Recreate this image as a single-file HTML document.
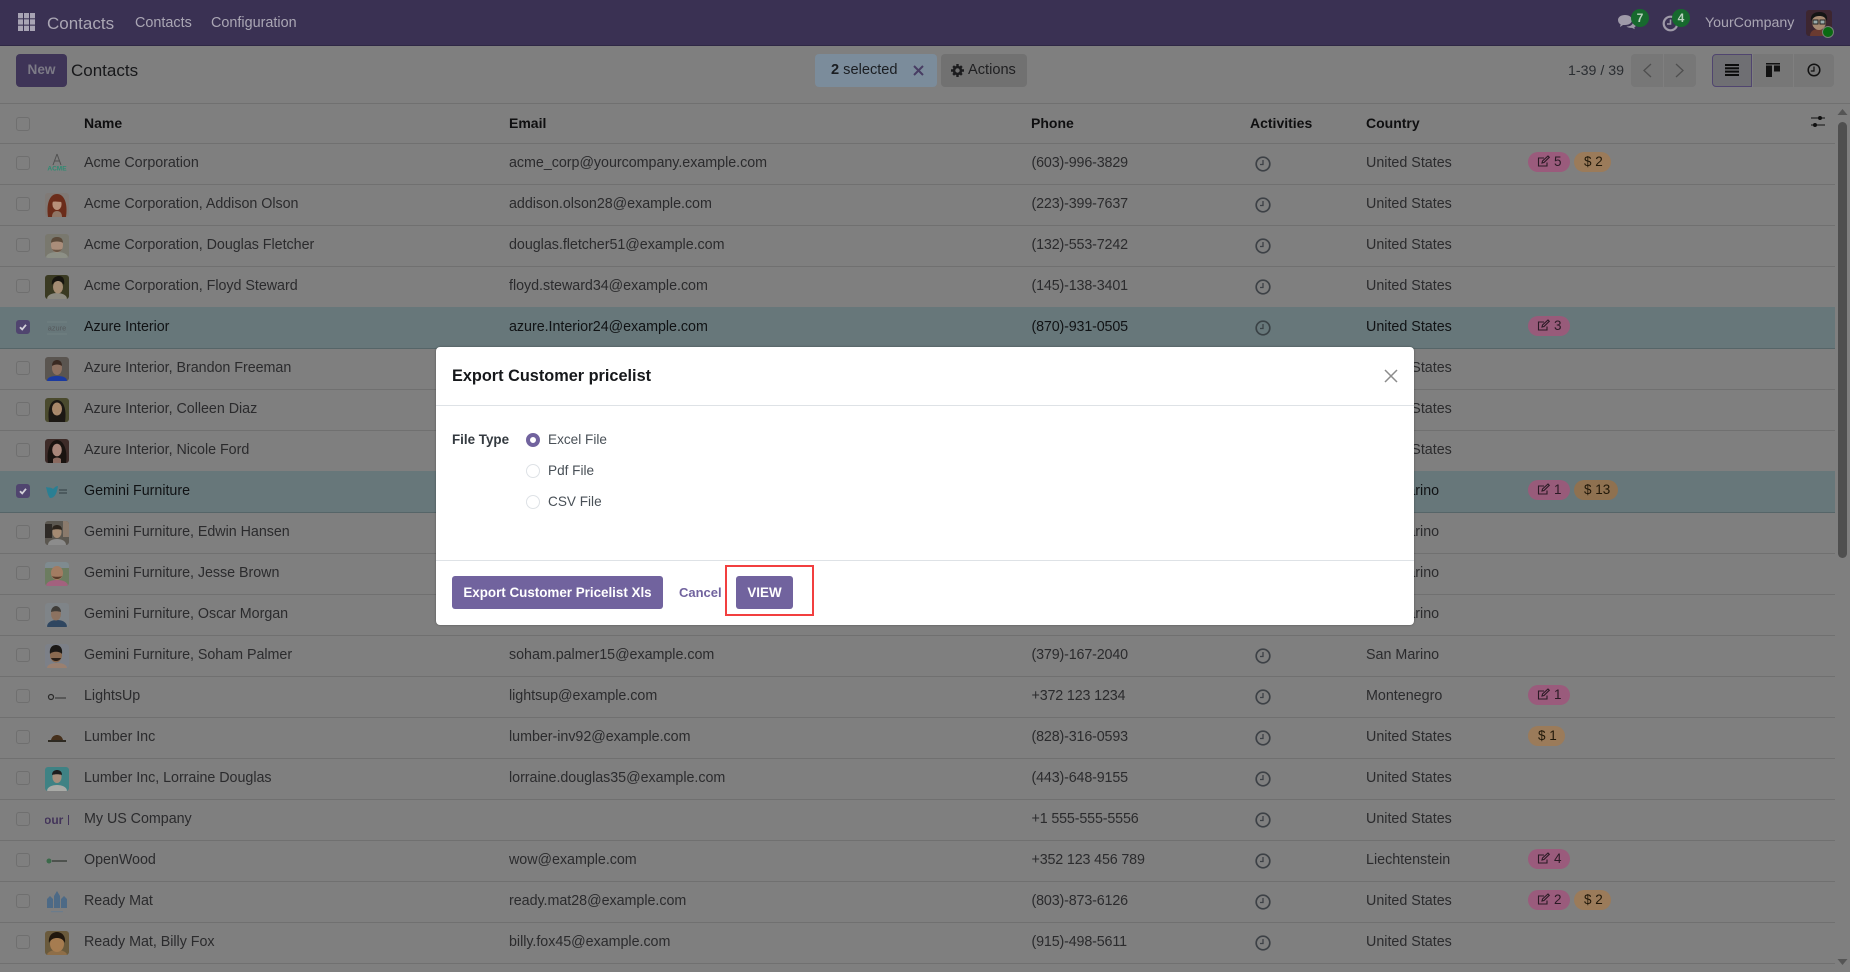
<!DOCTYPE html>
<html lang="en"><head><meta charset="utf-8"><title>Contacts</title>
<style>
*{box-sizing:border-box}
html,body{margin:0;padding:0;width:1850px;height:972px;overflow:hidden;background:#7f7f7f;font-family:"Liberation Sans",sans-serif;color:#2b2b2d}
.dim{position:absolute;left:0;top:0;width:1850px;height:972px;background:#7f7f7f}
.abs,.nav span,.cp>*,.r>*{position:absolute;white-space:nowrap}
.nav{position:absolute;left:0;top:0;width:1850px;height:46px;background:#3a3153;border-bottom:1px solid #2f2845;color:#aaa6b4;font-size:14.4px}
.nav span{line-height:47px;top:0}
.cp{position:absolute;left:0;top:46px;width:1850px;height:58px;border-bottom:1px solid #707070}
.btn{top:8px;height:33px;border-radius:4px;line-height:32px;font-size:14.6px}
.list{position:absolute;left:0;top:104px;width:1835px}
.h{position:relative;height:40px;border-bottom:1px solid #707070;font-weight:bold;font-size:14px;color:#0f0f10}
.h span{position:absolute;top:0;line-height:38px}
.r{position:relative;height:41px;border-bottom:1px solid #707070;font-size:14.3px;color:#2b2b2d}
.r.s{background:#67777a;color:#101214;border-bottom-color:#566568;box-shadow:0 -1px 0 #67777a}
.r>span{top:0;line-height:38px}
.n{left:84px;letter-spacing:-.03px}.e{left:509px;letter-spacing:-.03px}.p{left:1031.500px;letter-spacing:-.15px}.c{left:1366px}
.cb{position:absolute;left:16px;top:12px;width:14px;height:14px;border:1px solid #6f6f6f;border-radius:3px}
.s .cb{background:#50456f;border-color:#50456f}
.cb svg{position:absolute;left:1px;top:1px}
.av{position:absolute;left:45px;top:8px;width:24px;height:24px;border-radius:3px;overflow:hidden}
.ck{position:absolute;left:1255px;top:12px;width:16px;height:16px}
.t{position:absolute;top:8px;height:20px;border-radius:10px;line-height:19px;font-size:13.5px;color:#2b1a25;padding-left:10px}
.t svg{position:absolute;left:9px;top:3px}
.t1{background:#9a5b7c}.t2{background:#9b7b5a;color:#201708}
.t1 b{font-weight:normal;position:absolute;left:26px}
.t2 b{font-weight:normal}
.bd{position:absolute;border-radius:50%;background:#17692e;color:#b9d3bf;text-align:center;font-size:12px;font-weight:bold;width:18px;height:18px;line-height:18px}
.modal{position:absolute;left:436px;top:347px;width:978px;height:278px;background:#fff;border-radius:4px;box-shadow:0 0 2px rgba(0,0,0,.35);color:#495057}
.modal>*{position:absolute;white-space:nowrap}
.rd{width:14px;height:14px;border-radius:50%;border:1px solid #dee2e6;left:90px}
.lb{left:112px;font-size:13.6px;line-height:16px}
.mb{top:229px;height:33px;background:#71639e;color:#fff;border-radius:3px;font-weight:bold;font-size:13.4px;line-height:33px;text-align:center}
</style></head><body>

<div class="dim">
<div class="nav">
<svg class="abs" style="left:18px;top:13px" width="17" height="18" fill="#a8a4b4"><rect width="5" height="5.300"/><rect x="6" width="5" height="5.300"/><rect x="12" width="5" height="5.300"/><rect y="6.300" width="5" height="5.300"/><rect x="6" y="6.300" width="5" height="5.300"/><rect x="12" y="6.300" width="5" height="5.300"/><rect y="12.700" width="5" height="5.300"/><rect x="6" y="12.700" width="5" height="5.300"/><rect x="12" y="12.700" width="5" height="5.300"/></svg>
<span style="left:47px;font-size:17px">Contacts</span>
<span style="left:135px">Contacts</span>
<span style="left:211px">Configuration</span>
<svg class="abs" style="left:1618px;top:14px" width="20" height="16" fill="#9f9aa9"><path d="M0 6C0 3 3 1 7 1s7 2 7 5-3 5-7 5H5l-3 2 .6-2.600C1 9.500 0 8 0 6z"/><path d="M9 12.500c3.500 0 6-2 6.500-5 1.500.6 2.500 1.800 2.500 3.200 0 1.200-.7 2.200-1.800 2.800l.6 1.800-2.800-1.400h-1c-1.800 0-3.500-.5-4.500-1.400z"/></svg>
<div class="bd" style="left:1631px;top:9px">7</div>
<svg class="abs" style="left:1662px;top:15px" width="17" height="17" fill="none" stroke="#9f9aa9" stroke-width="2.200"><circle cx="8.500" cy="8.500" r="6.800"/><path d="M8.500 4.500v4.500h-3.500" stroke-width="1.600"/></svg>
<div class="bd" style="left:1672px;top:9px">4</div>
<span style="left:1705px;font-size:14.2px">YourCompany</span>
<svg class="abs" style="left:1806px;top:10px;border-radius:3px" width="26" height="26" viewBox="0 0 26 26"><rect width="26" height="26" fill="#3d2630"/><path d="M4 26c0-5 4-7 9-7s9 2 9 7z" fill="#6a3a30"/><ellipse cx="13" cy="12" rx="7" ry="8" fill="#a78a72"/><path d="M5 11C4 4 9 2 14 2s8 3 7 9c-2-4-4-5-8-5s-6 2-8 5z" fill="#151515"/><rect x="7" y="10" width="5" height="4" fill="#9aa" stroke="#222"/><rect x="14" y="10" width="5" height="4" fill="#9aa" stroke="#222"/></svg>
<div class="abs" style="left:1822px;top:26px;width:12px;height:12px;border-radius:50%;background:#0a6a12;border:1px solid #777f77"></div>
</div>

<div class="cp">
<div class="btn" style="left:16px;top:8px;width:51px;background:#3e3457;color:#7c7a86;font-weight:bold;font-size:13.600px;text-align:center;line-height:32px">New</div>
<div style="left:71px;top:0;line-height:50px;font-size:17px;color:#17181a">Contacts</div>
<div class="btn" style="left:815px;width:122px;background:#7b8c9b;color:#1b1e22;padding-left:16px"><b>2</b> selected</div>
<svg style="left:913px;top:19px" width="11" height="11" stroke="#483d63" stroke-width="2" fill="none"><path d="M1 1l9 9M10 1l-9 9"/></svg>
<div class="btn" style="left:941px;width:86px;background:#717171;color:#1f1f21;padding-left:27px">Actions</div>
<svg style="left:951px;top:18px" width="13" height="13" viewBox="0 0 13 13"><circle cx="6.500" cy="6.500" r="3.500" fill="none" stroke="#1c1c1e" stroke-width="2.600"/><path d="M5.300 0h2.400v2.500H5.300zM5.300 10.500h2.400V13H5.300zM0 5.300h2.500v2.400H0zM10.500 5.300H13v2.400h-2.500zM1.300 3l1.700-1.700 1.500 1.500-1.700 1.700zM8.500 10.200l1.700-1.700 1.500 1.500-1.700 1.700zM1.300 10l1.500-1.500 1.700 1.700L3 11.700zM8.500 2.800L10 1.300 11.700 3 10.200 4.500z" fill="#1c1c1e"/></svg>
<div style="left:1568px;top:0;line-height:50px;font-size:14.2px;color:#2a2d31">1-39 / 39</div>
<div class="btn" style="left:1631px;width:32px;background:#777;border-radius:4px 0 0 4px"></div>
<div class="btn" style="left:1664px;width:32px;background:#777;border-radius:0 4px 4px 0"></div>
<svg style="left:1642px;top:17px" width="10" height="15" fill="none" stroke="#4f4f4f" stroke-width="1.300"><path d="M9 1L2 7.500 9 14"/></svg>
<svg style="left:1675px;top:17px" width="10" height="15" fill="none" stroke="#4f4f4f" stroke-width="1.300"><path d="M1 1l7 6.500L1 14"/></svg>
<div class="btn" style="left:1712px;width:40px;background:#6f6f73;border:1px solid #50456f;border-radius:4px 0 0 4px"></div>
<div class="btn" style="left:1753px;width:40px;background:#777;border-radius:0"></div>
<div class="btn" style="left:1794px;width:40px;background:#777;border-radius:0 4px 4px 0"></div>
<svg style="left:1725px;top:18px" width="14" height="12" fill="#0c0c0c"><rect width="14" height="2"/><rect y="3.300" width="14" height="2"/><rect y="6.600" width="14" height="2"/><rect y="10" width="14" height="2"/></svg>
<svg style="left:1766px;top:17px" width="14" height="14" fill="#111"><rect width="14" height="1.500"/><rect y="2.500" width="6" height="11.500"/><rect x="8" y="2.500" width="6" height="6"/></svg>
<svg style="left:1807px;top:17px" width="14" height="14" fill="none" stroke="#111" stroke-width="1.500"><circle cx="7" cy="7" r="5.800"/><path d="M7 3.500V8H3.800" stroke-width="1.200"/></svg>
</div>

<div class="list">
<div class="h"><i class="cb" style="top:13px"></i><span style="left:84px">Name</span><span style="left:509px">Email</span><span style="left:1031px">Phone</span><span style="left:1250px">Activities</span><span style="left:1366px">Country</span>
<svg style="position:absolute;left:1811px;top:11px" width="14" height="12" fill="#111" stroke="#111"><path d="M0 3h14M0 10h14" stroke-width="1"/><circle cx="9" cy="3" r="1.500"/><circle cx="4" cy="10" r="1.500"/></svg></div>

<div class="r"><i class="cb"></i><svg class="av" viewBox="0 0 24 24"><path d="M12 2l-4 11M12 2l4 11M9 9h6" stroke="#505050" fill="none"/><text x="12" y="18.500" font-size="6.500" font-weight="bold" fill="#2f8a72" text-anchor="middle" font-family="Liberation Sans">ACME</text></svg><span class="n">Acme Corporation</span><span class="e">acme_corp@yourcompany.example.com</span><span class="p">(603)-996-3829</span><svg class="ck" viewBox="0 0 16 16" fill="none" stroke="#3d4146" stroke-width="1.700"><circle cx="8" cy="8" r="6.800"/><path d="M8 4v4.500H5" stroke-width="1.300"/></svg><span class="c">United States</span><div class="t t1" style="left:1528px;width:42px"><svg width="13" height="13" viewBox="0 0 13 13" fill="none" stroke="#2b1a25" stroke-width="1.100"><path d="M10 7.500V11H1.500V3H7M5 8l.5-2L11 1l1.300 1.300-5.300 5.200z"/></svg><b>5</b></div><div class="t t2" style="left:1574px;width:37px">$ <b>2</b></div></div>

<div class="r"><i class="cb"></i><svg class="av" viewBox="0 0 24 24"><rect width="24" height="24" fill="#807a76"/><path d="M3 24C1 10 5 1 12 1s11 9 9 23z" fill="#6b2c1a"/><path d="M7 24c0-4 2-6 5-6s5 2 5 6z" fill="#8f7666"/><ellipse cx="12" cy="11" rx="4.600" ry="6" fill="#b7907a"/><path d="M7 9c1-4 3-5 5-5s4 1 5 5c-3 0-7-1-10 0z" fill="#6b2c1a"/></svg><span class="n">Acme Corporation, Addison Olson</span><span class="e">addison.olson28@example.com</span><span class="p">(223)-399-7637</span><svg class="ck" viewBox="0 0 16 16" fill="none" stroke="#3d4146" stroke-width="1.700"><circle cx="8" cy="8" r="6.800"/><path d="M8 4v4.500H5" stroke-width="1.300"/></svg><span class="c">United States</span></div>

<div class="r"><i class="cb"></i><svg class="av" viewBox="0 0 24 24"><rect width="24" height="24" fill="#79786e"/><path d="M1 24c0-4 5-6 11-6s11 2 11 6z" fill="#8d9086"/><ellipse cx="12" cy="11" rx="6" ry="7.500" fill="#a98d7a"/><path d="M6 9c0-5 3-6 6-6s6 1 6 6c-2-2-10-2-12 0z" fill="#5b4a3a"/><path d="M7 15c2 4 8 4 10 0-1 1-9 1-10 0z" fill="#6a5544"/></svg><span class="n">Acme Corporation, Douglas Fletcher</span><span class="e">douglas.fletcher51@example.com</span><span class="p">(132)-553-7242</span><svg class="ck" viewBox="0 0 16 16" fill="none" stroke="#3d4146" stroke-width="1.700"><circle cx="8" cy="8" r="6.800"/><path d="M8 4v4.500H5" stroke-width="1.300"/></svg><span class="c">United States</span></div>

<div class="r"><i class="cb"></i><svg class="av" viewBox="0 0 24 24"><rect width="24" height="24" fill="#3a3a22"/><path d="M2 24c0-4 5-6 10-6s10 2 10 6z" fill="#8c8a80"/><ellipse cx="13" cy="12" rx="5" ry="6.500" fill="#a48c72"/><path d="M7 10C6 4 10 1 14 1s6 3 5 9c-2-3-4-4-6-4s-4 1-6 4z" fill="#17150f"/></svg><span class="n">Acme Corporation, Floyd Steward</span><span class="e">floyd.steward34@example.com</span><span class="p">(145)-138-3401</span><svg class="ck" viewBox="0 0 16 16" fill="none" stroke="#3d4146" stroke-width="1.700"><circle cx="8" cy="8" r="6.800"/><path d="M8 4v4.500H5" stroke-width="1.300"/></svg><span class="c">United States</span></div>

<div class="r s"><i class="cb"><svg width="10" height="10" fill="none" stroke="#d4d2da" stroke-width="1.800"><path d="M2 5.200l2.200 2.200L8 2.800"/></svg></i><svg class="av" viewBox="0 0 24 24"><path d="M2 6h20M2 18h20" stroke="#7d8a8c" stroke-width=".5"/><text x="12" y="14.500" font-size="7.400" fill="#55595c" text-anchor="middle" font-family="Liberation Sans">azure</text></svg><span class="n">Azure Interior</span><span class="e">azure.Interior24@example.com</span><span class="p">(870)-931-0505</span><svg class="ck" viewBox="0 0 16 16" fill="none" stroke="#3a4246" stroke-width="1.700"><circle cx="8" cy="8" r="6.800"/><path d="M8 4v4.500H5" stroke-width="1.300"/></svg><span class="c">United States</span><div class="t t1" style="left:1528px;width:42px;background:#985b7a"><svg width="13" height="13" viewBox="0 0 13 13" fill="none" stroke="#2b1a25" stroke-width="1.100"><path d="M10 7.500V11H1.500V3H7M5 8l.5-2L11 1l1.300 1.300-5.300 5.200z"/></svg><b>3</b></div></div>

<div class="r"><i class="cb"></i><svg class="av" viewBox="0 0 24 24"><rect width="24" height="24" fill="#5a5550"/><path d="M2 24c0-4 5-5 10-5s10 1 10 5z" fill="#1b3aa0"/><ellipse cx="12" cy="11" rx="5" ry="7" fill="#8c7060"/><path d="M7 9c0-5 3-6 5-6s5 1 5 6c-3-2-7-2-10 0z" fill="#3a2a22"/></svg><span class="n">Azure Interior, Brandon Freeman</span><span class="c">United States</span></div>

<div class="r"><i class="cb"></i><svg class="av" viewBox="0 0 24 24"><rect width="24" height="24" fill="#4a4a2e"/><path d="M4 24C2 10 6 2 12 2s10 8 8 22z" fill="#1c1814"/><ellipse cx="12" cy="11" rx="5" ry="6.500" fill="#a8876a"/><path d="M8 14c2 2 6 2 8 0-1 2-7 2-8 0z" fill="#ddd"/></svg><span class="n">Azure Interior, Colleen Diaz</span><span class="c">United States</span></div>

<div class="r"><i class="cb"></i><svg class="av" viewBox="0 0 24 24"><rect width="24" height="24" fill="#3d2b28"/><path d="M3 24C1 10 6 1 12 1s11 9 9 23z" fill="#191310"/><ellipse cx="12" cy="11" rx="4.800" ry="6.300" fill="#a8867a"/><path d="M8 20c2-2 6-2 8 0v4H8z" fill="#8a6a60"/></svg><span class="n">Azure Interior, Nicole Ford</span><span class="c">United States</span></div>

<div class="r s"><i class="cb"><svg width="10" height="10" fill="none" stroke="#d4d2da" stroke-width="1.800"><path d="M2 5.200l2.200 2.200L8 2.800"/></svg></i><svg class="av" viewBox="0 0 24 24"><path d="M1 7c3 1 5 0 7 2 2-2 3-3 5-3-1 5-2 12-8 12C3 16 2 11 1 7z" fill="#2a7f93"/><path d="M14 10h8M14 13h8" stroke="#3d4a4d" stroke-width="1.300"/></svg><span class="n">Gemini Furniture</span><span class="c">San Marino</span><div class="t t1" style="left:1528px;width:42px;background:#985b7a"><svg width="13" height="13" viewBox="0 0 13 13" fill="none" stroke="#2b1a25" stroke-width="1.100"><path d="M10 7.500V11H1.500V3H7M5 8l.5-2L11 1l1.300 1.300-5.300 5.200z"/></svg><b>1</b></div><div class="t t2" style="left:1574px;width:44px;background:#8f7150">$ <b>13</b></div></div>

<div class="r"><i class="cb"></i><svg class="av" viewBox="0 0 24 24"><rect width="24" height="24" fill="#5b5750"/><rect width="7" height="14" y="3" fill="#2e2a26"/><rect x="18" width="6" height="16" fill="#8a7a6c"/><path d="M3 24c0-4 4-6 9-6s9 2 9 6z" fill="#8c8c8c"/><ellipse cx="12" cy="11" rx="4.600" ry="6" fill="#a48a72"/><path d="M7 9c0-4 3-5 5-5s5 1 5 5c-3-1-7-1-10 0z" fill="#2c241c"/></svg><span class="n">Gemini Furniture, Edwin Hansen</span><span class="c">San Marino</span></div>

<div class="r"><i class="cb"></i><svg class="av" viewBox="0 0 24 24"><rect width="24" height="24" fill="#6c7c60"/><rect width="24" height="6" fill="#7f8b90"/><path d="M1 24c0-4 5-6 11-6s11 2 11 6z" fill="#a3617e"/><ellipse cx="12" cy="11" rx="6" ry="7" fill="#a37c62"/><path d="M7 14c2 4 8 4 10 0-1 1-9 1-10 0z" fill="#5a3c2a"/></svg><span class="n">Gemini Furniture, Jesse Brown</span><span class="c">San Marino</span></div>

<div class="r"><i class="cb"></i><svg class="av" viewBox="0 0 24 24"><rect width="24" height="24" fill="#7f8488"/><path d="M2 24c0-5 5-7 10-7s10 2 10 7z" fill="#2f4660"/><ellipse cx="11" cy="11" rx="5" ry="6.500" fill="#8c7260"/><path d="M6 9c0-4 3-6 5-6s5 2 5 6c-3-1-7-1-10 0z" fill="#3f3c38"/></svg><span class="n">Gemini Furniture, Oscar Morgan</span><span class="c">San Marino</span></div>

<div class="r"><i class="cb"></i><svg class="av" viewBox="0 0 24 24"><rect width="24" height="24" fill="#7c8088"/><path d="M2 24c0-3 4-5 10-5s10 2 10 5z" fill="#9a8070"/><ellipse cx="11" cy="11" rx="6" ry="7.500" fill="#8a6a50"/><path d="M5 10C4 3 8 1 11 1s7 2 6 9c-2-3-10-3-12 0z" fill="#1b1815"/><path d="M6 14c2 4 8 4 10 0z" fill="#2a2018"/></svg><span class="n">Gemini Furniture, Soham Palmer</span><span class="e">soham.palmer15@example.com</span><span class="p">(379)-167-2040</span><svg class="ck" viewBox="0 0 16 16" fill="none" stroke="#3d4146" stroke-width="1.700"><circle cx="8" cy="8" r="6.800"/><path d="M8 4v4.500H5" stroke-width="1.300"/></svg><span class="c">San Marino</span></div>

<div class="r"><i class="cb"></i><svg class="av" viewBox="0 0 24 24"><circle cx="6" cy="12" r="2.500" fill="none" stroke="#2a2a2a" stroke-width="1.200"/><path d="M10 13h11" stroke="#4a4a4a" stroke-width="1.500"/></svg><span class="n">LightsUp</span><span class="e">lightsup@example.com</span><span class="p">+372 123 1234</span><svg class="ck" viewBox="0 0 16 16" fill="none" stroke="#3d4146" stroke-width="1.700"><circle cx="8" cy="8" r="6.800"/><path d="M8 4v4.500H5" stroke-width="1.300"/></svg><span class="c">Montenegro</span><div class="t t1" style="left:1528px;width:42px"><svg width="13" height="13" viewBox="0 0 13 13" fill="none" stroke="#2b1a25" stroke-width="1.100"><path d="M10 7.500V11H1.500V3H7M5 8l.5-2L11 1l1.300 1.300-5.300 5.200z"/></svg><b>1</b></div></div>

<div class="r"><i class="cb"></i><svg class="av" viewBox="0 0 24 24"><path d="M6 14c1-4 4-5 6-5s5 1 6 5z" fill="#46301c"/><rect x="3" y="14" width="18" height="2" fill="#2e2a22"/></svg><span class="n">Lumber Inc</span><span class="e">lumber-inv92@example.com</span><span class="p">(828)-316-0593</span><svg class="ck" viewBox="0 0 16 16" fill="none" stroke="#3d4146" stroke-width="1.700"><circle cx="8" cy="8" r="6.800"/><path d="M8 4v4.500H5" stroke-width="1.300"/></svg><span class="c">United States</span><div class="t t2" style="left:1528px;width:37px">$ <b>1</b></div></div>

<div class="r"><i class="cb"></i><svg class="av" viewBox="0 0 24 24"><rect width="24" height="24" fill="#3f8284"/><path d="M2 24c0-4 5-6 10-6s10 2 10 6z" fill="#a9aaa6"/><ellipse cx="12" cy="10" rx="4.600" ry="6" fill="#a58e7c"/><path d="M7 8c0-4 3-5 5-5s5 1 5 5c-3-1-7-1-10 0z" fill="#1d1d1d"/></svg><span class="n">Lumber Inc, Lorraine Douglas</span><span class="e">lorraine.douglas35@example.com</span><span class="p">(443)-648-9155</span><svg class="ck" viewBox="0 0 16 16" fill="none" stroke="#3d4146" stroke-width="1.700"><circle cx="8" cy="8" r="6.800"/><path d="M8 4v4.500H5" stroke-width="1.300"/></svg><span class="c">United States</span></div>

<div class="r"><i class="cb"></i><svg class="av" viewBox="0 0 24 24"><text x="-1" y="16" font-size="12" font-weight="bold" fill="#43345a" font-family="Liberation Sans">our</text><rect x="23" y="7" width="1" height="10" fill="#43345a"/></svg><span class="n">My US Company</span><span class="p">+1 555-555-5556</span><svg class="ck" viewBox="0 0 16 16" fill="none" stroke="#3d4146" stroke-width="1.700"><circle cx="8" cy="8" r="6.800"/><path d="M8 4v4.500H5" stroke-width="1.300"/></svg><span class="c">United States</span></div>

<div class="r"><i class="cb"></i><svg class="av" viewBox="0 0 24 24"><circle cx="4" cy="12" r="2.500" fill="#3b6a4a"/><path d="M7 12h15" stroke="#3f443f" stroke-width="1.600"/></svg><span class="n">OpenWood</span><span class="e">wow@example.com</span><span class="p">+352 123 456 789</span><svg class="ck" viewBox="0 0 16 16" fill="none" stroke="#3d4146" stroke-width="1.700"><circle cx="8" cy="8" r="6.800"/><path d="M8 4v4.500H5" stroke-width="1.300"/></svg><span class="c">Liechtenstein</span><div class="t t1" style="left:1528px;width:42px"><svg width="13" height="13" viewBox="0 0 13 13" fill="none" stroke="#2b1a25" stroke-width="1.100"><path d="M10 7.500V11H1.500V3H7M5 8l.5-2L11 1l1.300 1.300-5.300 5.200z"/></svg><b>4</b></div></div>

<div class="r"><i class="cb"></i><svg class="av" viewBox="0 0 24 24" fill="#4d6a86"><path d="M2 9l3-3 3 3v9H2zM16 9l3-3 3 3v9h-6zM9 6l3-5 3 5v12H9z"/><rect x="6" y="21" width="12" height="1.200" fill="#6b7c8c"/></svg><span class="n">Ready Mat</span><span class="e">ready.mat28@example.com</span><span class="p">(803)-873-6126</span><svg class="ck" viewBox="0 0 16 16" fill="none" stroke="#3d4146" stroke-width="1.700"><circle cx="8" cy="8" r="6.800"/><path d="M8 4v4.500H5" stroke-width="1.300"/></svg><span class="c">United States</span><div class="t t1" style="left:1528px;width:42px"><svg width="13" height="13" viewBox="0 0 13 13" fill="none" stroke="#2b1a25" stroke-width="1.100"><path d="M10 7.500V11H1.500V3H7M5 8l.5-2L11 1l1.300 1.300-5.300 5.200z"/></svg><b>2</b></div><div class="t t2" style="left:1574px;width:37px">$ <b>2</b></div></div>

<div class="r"><i class="cb"></i><svg class="av" viewBox="0 0 24 24"><rect width="24" height="24" fill="#6a5a3c"/><path d="M2 24c0-3 5-5 10-5s10 2 10 5z" fill="#8e6e48"/><ellipse cx="12" cy="13" rx="7" ry="8" fill="#a67c50"/><path d="M4 12C3 4 8 1 12 1s9 3 8 11c-2-4-5-5-8-5s-6 1-8 5z" fill="#20170e"/></svg><span class="n">Ready Mat, Billy Fox</span><span class="e">billy.fox45@example.com</span><span class="p">(915)-498-5611</span><svg class="ck" viewBox="0 0 16 16" fill="none" stroke="#3d4146" stroke-width="1.700"><circle cx="8" cy="8" r="6.800"/><path d="M8 4v4.500H5" stroke-width="1.300"/></svg><span class="c">United States</span></div>
</div>

<svg class="abs" style="left:1835px;top:104px" width="15" height="868"><path d="M2.500 11L7.500 5l5 6z" fill="#555"/><rect x="3" y="18" width="9" height="436" rx="4.500" fill="#4f4f4f"/><path d="M2.500 855l5 6 5-6z" fill="#555"/></svg>
</div>

<div class="modal">
<div style="left:16px;top:0;line-height:58px;font-size:16.3px;font-weight:bold;color:#16181b">Export Customer pricelist</div>
<svg style="left:948px;top:22px" width="14" height="14" stroke="#8c8c8c" stroke-width="1.500" fill="none"><path d="M1 1l12 12M13 1L1 13"/></svg>
<div style="left:0;top:58px;width:978px;height:1px;background:#dee2e6"></div>
<div style="left:16px;top:85px;font-size:13.4px;font-weight:bold;line-height:16px;color:#343a40">File Type</div>
<div class="rd" style="top:86px;border:4px solid #71639e;background:#fff"></div><div class="lb" style="top:85px">Excel File</div>
<div class="rd" style="top:117px"></div><div class="lb" style="top:116px">Pdf File</div>
<div class="rd" style="top:148px"></div><div class="lb" style="top:147px">CSV File</div>
<div style="left:0;top:213px;width:978px;height:1px;background:#dee2e6"></div>
<div class="mb" style="left:16px;width:211px">Export Customer Pricelist Xls</div>
<div style="left:243px;top:229px;line-height:33px;font-size:13px;font-weight:bold;color:#71639e">Cancel</div>
<div class="mb" style="left:300px;width:57px">VIEW</div>
<div style="left:289px;top:218px;width:89px;height:51px;border:2px solid #f23f3f"></div>
</div>

</body></html>
